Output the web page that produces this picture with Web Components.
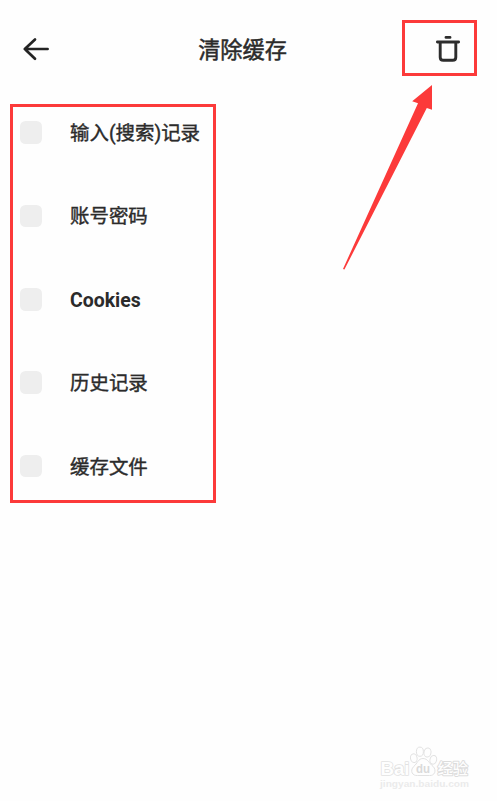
<!DOCTYPE html>
<html lang="zh-CN">
<head>
<meta charset="utf-8">
<title>清除缓存</title>
<style>
html,body{margin:0;padding:0;background:#fefefe}
body{width:497px;height:801px;overflow:hidden;font-family:Roboto,"Noto Sans CJK SC",sans-serif;color:#2b2b2b}
</style>
</head>
<body>
<clear-cache-page></clear-cache-page>
<script>
const define = (name, html) => customElements.define(name, class extends HTMLElement {
  constructor() {
    super();
    const t = document.createElement('template');
    t.innerHTML = html;
    this.attachShadow({mode: 'open'}).append(t.content.cloneNode(true));
  }
});

define('back-button', `
<style>:host{display:block;width:28px;height:24px}svg{display:block}</style>
<svg width="28" height="24" viewBox="22 37 28 24" fill="none" stroke="#242424" stroke-width="2.7" stroke-linecap="round" stroke-linejoin="round">
<path d="M47.6 49H24.8M35 39.4L24.8 49L35 58.8"/></svg>`);

define('delete-button', `
<style>:host{display:block;box-sizing:border-box;width:75px;height:56px;border:3px solid #fc3a3a}svg{display:block}</style>
<svg width="69" height="50" viewBox="405 23 69 50" fill="none" stroke="#2d2d2d" stroke-width="2.9" stroke-linecap="round" stroke-linejoin="round">
<path d="M446 37.4H450M437.4 42H458.6M440.2 42.2V57.2Q440.2 60.3 443.3 60.3H452.7Q455.8 60.3 455.8 57.2V42.2"/></svg>`);

define('page-header', `
<style>
:host{display:grid;grid-template-columns:83px 1fr 95px;align-items:center;height:56px;padding-top:20px}
.back{padding-left:22px;padding-top:2px}
.title{text-align:center;font-size:22.2px;line-height:32px;padding-top:3px;-webkit-text-stroke:.5px #2b2b2b}
</style>
<div class="back"><slot name="back"></slot></div>
<div class="title"><slot></slot></div>
<slot name="action"></slot>`);

define('check-row', `
<style>
:host{display:flex;align-items:center;gap:28px;height:22.5px}
i{width:22.5px;height:22.5px;border-radius:5.5px;background:#eee;flex:none}
span{font-size:19.45px;line-height:28px;padding-top:3px;white-space:nowrap;-webkit-text-stroke:var(--stroke,.4px) #2b2b2b;font-weight:var(--weight,400)}
</style><i></i><span><slot></slot></span>`);

define('option-list', `
<style>
:host{display:flex;flex-direction:column;gap:60.9px;box-sizing:border-box;width:206px;height:399px;margin:28px 0 0 10px;padding:14.3px 0 0 6.5px;border:3px solid #fc3a3a}
</style><slot></slot>`);

define('pointer-arrow', `
<style>:host{display:block;position:absolute;left:340px;top:82px}svg{display:block}</style>
<svg width="96" height="192" viewBox="340 82 96 192"><path fill="#fc3a3a" d="M432 85L412.2 101.2L418 103.2L343 269L344.4 269.6L426.8 108L432 109.8Z"/></svg>`);

define('site-watermark', `
<style>
:host{display:block;position:absolute;left:376px;top:744px}
svg{display:block}
text{font-family:"Liberation Sans","Noto Sans CJK SC",sans-serif;paint-order:stroke;stroke-linejoin:round}
</style>
<svg width="96" height="50" viewBox="376 744 96 50" fill="#fefefe" stroke="#e2e2e2">
<g stroke-width="1">
<ellipse cx="413.8" cy="758.2" rx="3.3" ry="4.4" transform="rotate(-12 413.8 758.2)"/>
<ellipse cx="419.9" cy="751.7" rx="3.5" ry="4.6"/>
<ellipse cx="427.5" cy="752.5" rx="3.5" ry="4.6" transform="rotate(10 427.5 752.5)"/>
<ellipse cx="433.3" cy="759.8" rx="3.3" ry="4.4" transform="rotate(15 433.3 759.8)"/>
<path d="M423 758.5C418 758.5 417.5 763.5 413.7 766.5C409.5 771 412.5 776 417.5 775.5H429.5C434.5 776 437 770.5 433 766.3C429 763.5 428 758.5 423 758.5Z"/>
</g>
<text x="380.5" y="774.8" font-size="19" font-weight="700" stroke-width="1.6" textLength="29" lengthAdjust="spacingAndGlyphs">Bai</text>
<text x="416" y="773" font-size="12" stroke-width="0" fill="#dadada" font-weight="700" textLength="14" lengthAdjust="spacingAndGlyphs">du</text>
<text x="437.5" y="774" font-size="15.3" font-weight="500" stroke-width="1.8" stroke="#dcdcdc" textLength="30.5">经验</text>
<text x="380" y="787.3" font-size="9" stroke-width="0" fill="#ebebeb" font-weight="700" textLength="89" lengthAdjust="spacingAndGlyphs">jingyan.baidu.com</text>
</svg>`);

define('clear-cache-page', `
<style>:host{display:block;position:relative;width:497px;height:801px;background:#fefefe}.latin{--weight:700;--stroke:0}</style>
<page-header><back-button slot="back"></back-button>清除缓存<delete-button slot="action"></delete-button></page-header>
<option-list>
<check-row>输入(搜索)记录</check-row>
<check-row>账号密码</check-row>
<check-row class="latin">Cookies</check-row>
<check-row>历史记录</check-row>
<check-row>缓存文件</check-row>
</option-list>
<pointer-arrow></pointer-arrow>
<site-watermark></site-watermark>`);
</script>
</body>
</html>
